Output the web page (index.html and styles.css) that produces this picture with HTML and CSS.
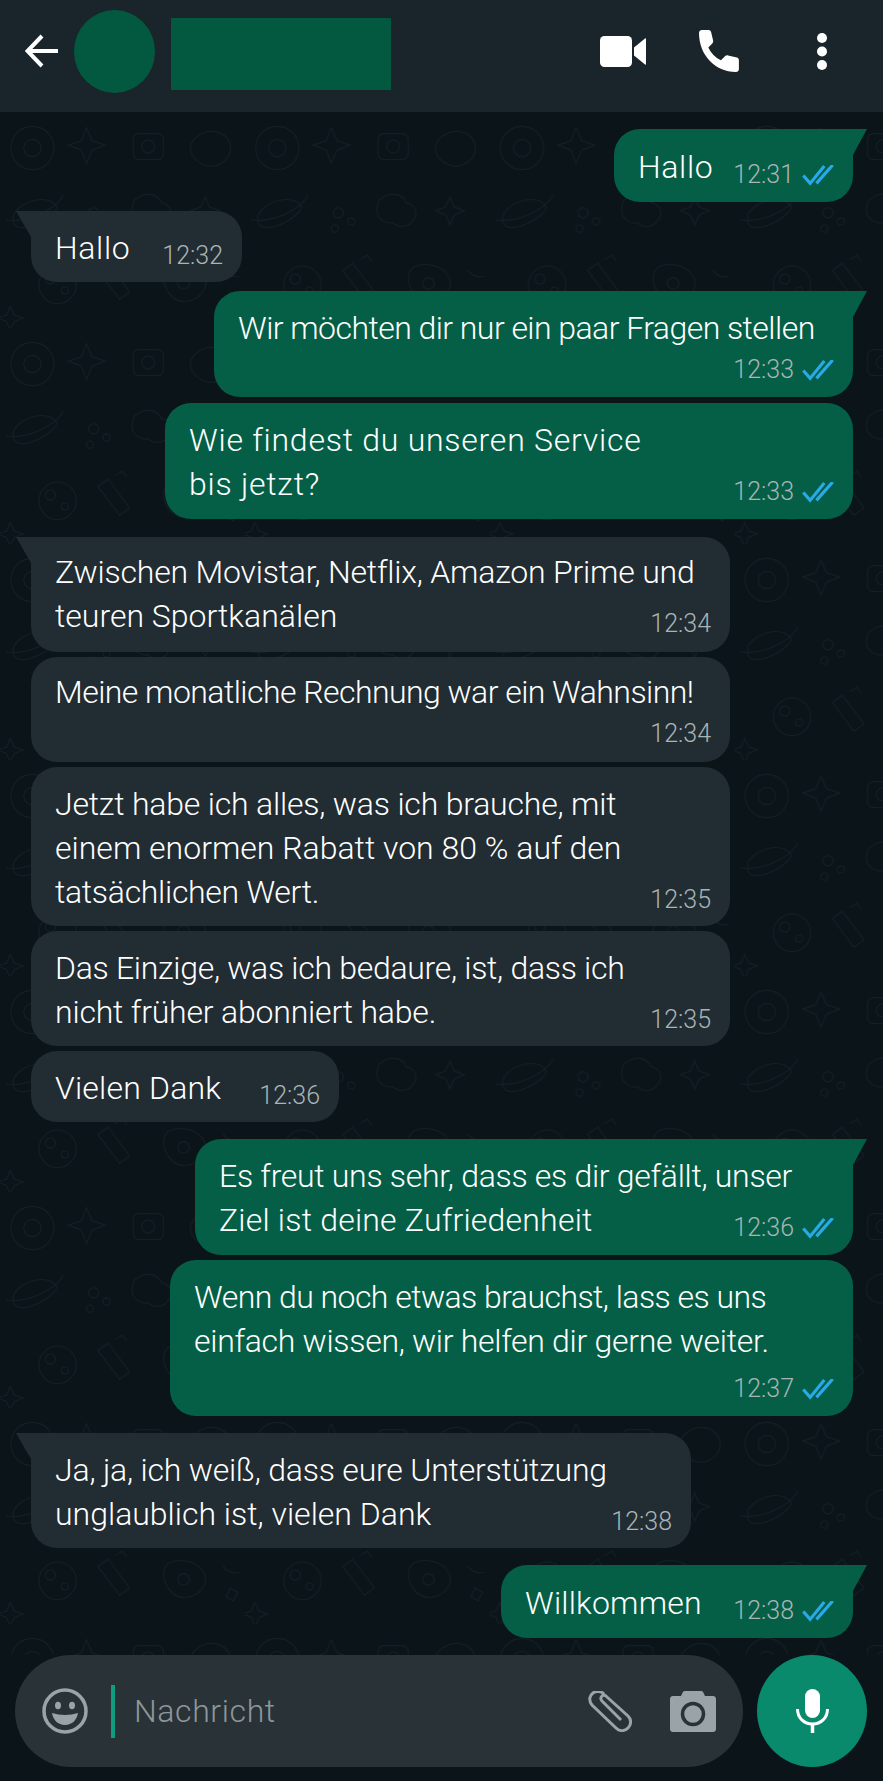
FILE: index.html
```html
<!DOCTYPE html>
<html lang="de">
<head>
    <meta charset="UTF-8">
    <meta name="viewport" content="width=device-width, initial-scale=1.0">
    <title>Chat</title>
    <link rel="stylesheet" href="styles.css">
</head>
<body>

    <!-- Top Bar -->
    <header class="topbar">
        <svg class="icon-back" viewBox="0 0 34 34"><path d="M33 17H3M17 2 2.500 17 17 32" fill="none" stroke="#fff" stroke-width="4"/></svg>
        <div class="avatar"></div>
        <div class="name-block"></div>
        <div class="topbar-actions">
            <svg class="icon-video" viewBox="0 0 46 31"><rect x="0" y="0" width="32" height="31" rx="4.500" fill="#fff"/><path d="M34 11.500 45 2.500c.5-.4 1-.1 1 .5v25c0 .6-.5.9-1 .5l-11-9z" fill="#fff"/></svg>
            <svg class="icon-phone" viewBox="0 0 43 42"><path d="M4 0h6.500c1.300 0 2.300.8 2.600 2l2 8.500c.3 1.100 0 2.100-.8 2.900l-4 4.100c2.700 5.800 6.900 10 12.600 12.700l4.100-4c.8-.8 1.900-1.100 3-.8l8.900 2.100c1.200.3 2 1.300 2 2.600V39c0 1.700-1.300 3-3 3C17.300 42 1 25.200 1 3c0-1.700 1.300-3 3-3z" fill="#fff"/></svg>
            <svg class="icon-dots" viewBox="0 0 12 37"><circle cx="6" cy="5" r="5" fill="#fff"/><circle cx="6" cy="18.500" r="5" fill="#fff"/><circle cx="6" cy="32" r="5" fill="#fff"/></svg>
        </div>
    </header>

    <!-- Chat Area -->
    <main class="chat">
        <svg class="doodles" width="883" height="1543">
            <defs>
                <pattern id="doodle" width="340" height="300" patternUnits="userSpaceOnUse" patternTransform="scale(.72)">
                    <g fill="none" stroke="#141f25" stroke-width="1.500">
                        <circle cx="45" cy="50" r="30"/>
                        <circle cx="45" cy="50" r="12"/>
                        <path d="M120 22l8 18 18 6-18 7-8 18-7-18-18-7 18-6z"/>
                        <rect x="185" y="30" width="42" height="36" rx="8"/>
                        <circle cx="206" cy="48" r="9"/>
                        <path d="M268 40c18-22 50-14 52 8 2 20-22 34-40 24-14-8-20-20-12-32z"/>
                        <path d="M20 140c16-20 46-24 58-10 6 10-34 34-52 30-8-2-10-12-6-20z"/>
                        <path d="M8 150c30 4 66-12 80-34"/>
                        <circle cx="130" cy="140" r="7"/><circle cx="148" cy="152" r="5"/><circle cx="125" cy="162" r="5"/>
                        <path d="M190 120c14-10 30-6 34 6 12 2 18 14 10 24-6 10-20 12-28 4-14 2-26-10-22-22 0-6 2-10 6-12z"/>
                        <path d="M285 118l6 14 14 5-14 6-6 14-6-14-14-6 14-5z"/>
                        <circle cx="80" cy="240" r="26"/>
                        <circle cx="70" cy="232" r="7"/><circle cx="90" cy="248" r="5"/>
                        <path d="M150 210l30 40-14 10-30-40zM160 205l10-6 6 8"/>
                        <path d="M235 215c20-8 44 0 50 18 4 16-14 32-32 30-20-2-36-34-18-48z"/>
                        <circle cx="255" cy="238" r="8"/>
                        <path d="M310 220c6 8 14 10 22 8M320 250l10 6-6 12-10-6z"/>
                        <path d="M14 270l6 12 12 4-12 5-6 12-5-12-12-5 12-4z"/>
                    </g>
                </pattern>
            </defs>
            <rect width="883" height="1543" fill="url(#doodle)"/>
        </svg>

        <div class="bubble out tail w-hallo-out first">
            <p class="text"><span class="line t-wide">Hallo</span></p>
            <span class="meta">12:31 <svg class="ticks" viewBox="0 0 30 20"><path d="M1 10l6.500 7.500L21 1M13.500 17.500 29 0" fill="none" stroke="#29a9e8" stroke-width="3"/></svg></span>
        </div>

        <div class="bubble in tail w-hallo-in near">
            <p class="text"><span class="line t-wide">Hallo</span></p>
            <span class="meta">12:32</span>
        </div>

        <div class="bubble out tail w-fragen near">
            <p class="text"><span class="line t-tight">Wir möchten dir nur ein paar Fragen stellen</span></p>
            <span class="meta">12:33 <svg class="ticks" viewBox="0 0 30 20"><path d="M1 10l6.500 7.500L21 1M13.500 17.500 29 0" fill="none" stroke="#29a9e8" stroke-width="3"/></svg></span>
        </div>

        <div class="bubble out w-service next">
            <p class="text"><span class="line t-widest">Wie findest du unseren Service</span><span class="line t-widest">bis jetzt?</span></p>
            <span class="meta">12:33 <svg class="ticks" viewBox="0 0 30 20"><path d="M1 10l6.500 7.500L21 1M13.500 17.500 29 0" fill="none" stroke="#29a9e8" stroke-width="3"/></svg></span>
        </div>

        <div class="bubble in tail w-full group lift">
            <p class="text"><span class="line t-snug">Zwischen Movistar, Netflix, Amazon Prime und</span><span class="line">teuren Sportkanälen</span></p>
            <span class="meta meta-up">12:34</span>
        </div>

        <div class="bubble in w-full lift">
            <p class="text"><span class="line t-tight">Meine monatliche Rechnung war ein Wahnsinn!</span></p>
            <span class="meta">12:34</span>
        </div>

        <div class="bubble in w-full">
            <p class="text"><span class="line t-snug">Jetzt habe ich alles, was ich brauche, mit</span><span class="line">einem enormen Rabatt von 80 % auf den</span><span class="line t-close">tatsächlichen Wert.</span></p>
            <span class="meta">12:35</span>
        </div>

        <div class="bubble in w-full">
            <p class="text"><span class="line t-close">Das Einzige, was ich bedaure, ist, dass ich</span><span class="line t-snug">nicht früher abonniert habe.</span></p>
            <span class="meta">12:35</span>
        </div>

        <div class="bubble in w-dank">
            <p class="text"><span class="line t-open">Vielen Dank</span></p>
            <span class="meta">12:36</span>
        </div>

        <div class="bubble out tail w-freut group-close">
            <p class="text"><span class="line t-close">Es freut uns sehr, dass es dir gefällt, unser</span><span class="line t-open">Ziel ist deine Zufriedenheit</span></p>
            <span class="meta meta-up">12:36 <svg class="ticks" viewBox="0 0 30 20"><path d="M1 10l6.500 7.500L21 1M13.500 17.500 29 0" fill="none" stroke="#29a9e8" stroke-width="3"/></svg></span>
        </div>

        <div class="bubble out w-wissen">
            <p class="text"><span class="line t-tight">Wenn du noch etwas brauchst, lass es uns</span><span class="line t-close">einfach wissen, wir helfen dir gerne weiter.</span></p>
            <span class="meta meta-row">12:37 <svg class="ticks" viewBox="0 0 30 20"><path d="M1 10l6.500 7.500L21 1M13.500 17.500 29 0" fill="none" stroke="#29a9e8" stroke-width="3"/></svg></span>
        </div>

        <div class="bubble in tail w-ja group-close">
            <p class="text"><span class="line t-snug">Ja, ja, ich weiß, dass eure Unterstützung</span><span class="line">unglaublich ist, vielen Dank</span></p>
            <span class="meta meta-up">12:38</span>
        </div>

        <div class="bubble out tail w-willkommen group-close">
            <p class="text"><span class="line t-open">Willkommen</span></p>
            <span class="meta">12:38 <svg class="ticks" viewBox="0 0 30 20"><path d="M1 10l6.500 7.500L21 1M13.500 17.500 29 0" fill="none" stroke="#29a9e8" stroke-width="3"/></svg></span>
        </div>
    </main>

    <!-- Message Input -->
    <footer class="composer">
        <div class="input-box">
            <svg class="icon-smiley" viewBox="0 0 46 46">
                <circle cx="23" cy="23" r="21" fill="none" stroke="#9aa3a8" stroke-width="3.500"/>
                <ellipse cx="16" cy="17.500" rx="3" ry="3.800" fill="#9aa3a8"/>
                <ellipse cx="30" cy="17.500" rx="3" ry="3.800" fill="#9aa3a8"/>
                <path d="M10 25c8 2.500 18 2.500 26 0-1 7-6 12-13 12s-12-5-13-12z" fill="#9aa3a8"/>
            </svg>
            <span class="cursor"></span>
            <span class="placeholder">Nachricht</span>
            <svg class="icon-clip" viewBox="0 0 44 41"><path d="M33 29 14 10c-2-2-1-4 0-5s3-1 5 1l21 19c4 4 3 9 0 12s-8 4-12 0L4 14C0 9 2 4 5 2s8-2 11 1" fill="none" stroke="#9aa3a8" stroke-width="3"/></svg>
            <svg class="icon-camera" viewBox="0 0 46 41"><path d="M15 0h16c1 0 1.700.4 2.200 1.200L35 5h8c1.700 0 3 1.300 3 3v30c0 1.700-1.300 3-3 3H3c-1.700 0-3-1.300-3-3V8c0-1.700 1.300-3 3-3h8l1.800-3.800C13.300.4 14 0 15 0z" fill="#9aa3a8"/><circle cx="23" cy="23" r="10.500" fill="none" stroke="#283237" stroke-width="3.500"/></svg>
        </div>
        <button class="mic-btn">
            <svg class="icon-mic" viewBox="0 0 33 44"><rect x="9" y="0" width="15" height="29" rx="7.500" fill="#fff"/><path d="M1.500 20c0 9 6.500 15 15 15s15-6 15-15" fill="none" stroke="#fff" stroke-width="3"/><path d="M16.500 34v10" stroke="#fff" stroke-width="3.500"/></svg>
        </button>
    </footer>

</body>
</html>
```

FILE: styles.css
```css
/* General Styles */
* {
    box-sizing: border-box;
}

body {
    margin: 0;
    width: 883px;
    height: 1781px;
    overflow: hidden;
    font-family: 'Roboto', sans-serif;
    background-color: #0a1419;
    color: #fff;
    position: relative;
}

/* Top Bar */
.topbar {
    height: 112px;
    background-color: #1a242b;
    display: flex;
    align-items: center;
    padding-left: 25px;
}

.icon-back {
    width: 34px;
    height: 34px;
    margin-top: -10px;
}

.avatar {
    width: 81px;
    height: 83px;
    margin: -9px 0 0 15px;
    border-radius: 50%;
    background-color: #03593f;
}

.name-block {
    width: 220px;
    height: 72px;
    margin: -4px 0 0 16px;
    background-color: #03593f;
}

.topbar-actions {
    margin-left: auto;
    margin-right: 55px;
    display: flex;
    align-items: center;
    margin-top: -10px;
}

.icon-video {
    width: 46px;
    height: 31px;
}

.icon-phone {
    width: 43px;
    height: 42px;
    margin-left: 52px;
}

.icon-dots {
    width: 12px;
    height: 37px;
    margin-left: 75px;
}

/* Chat Area */
.chat {
    position: relative;
    height: 1543px;
    display: flex;
    flex-direction: column;
    padding: 0 30px 0 31px;
    overflow: hidden;
}

.doodles {
    position: absolute;
    top: 0;
    left: 0;
}

/* Bubbles */
.bubble {
    position: relative;
    display: flex;
    flex-wrap: wrap;
    justify-content: space-between;
    align-items: flex-end;
    padding: 15px 19px 13px 24px;
    border-radius: 26px;
    margin-top: 5px;
}

.bubble.in {
    align-self: flex-start;
    background-color: #212c33;
    padding-bottom: 12px;
    min-height: 71px;
}

.bubble.out {
    align-self: flex-end;
    background-color: #045f46;
    min-height: 73px;
}

.bubble.first {
    margin-top: 17px;
}

.bubble.near {
    margin-top: 9px;
}

.bubble.next {
    margin-top: 6px;
}

.bubble.group {
    margin-top: 18px;
}

.bubble.group-close {
    margin-top: 17px;
}

.bubble.in.lift {
    padding-top: 13px;
    padding-bottom: 14px;
}

.bubble.in.tail {
    border-top-left-radius: 0;
}

.bubble.out.tail {
    border-top-right-radius: 0;
}

.bubble.tail::before {
    content: "";
    position: absolute;
    top: 0;
    width: 15px;
    height: 26px;
    background-color: inherit;
}

.bubble.in.tail::before {
    left: -15px;
    clip-path: polygon(0 0, 100% 0, 100% 100%);
}

.bubble.out.tail::before {
    right: -14px;
    width: 14px;
    clip-path: polygon(0 0, 100% 0, 0 100%);
}

.text {
    margin: 0;
    font-size: 32px;
    font-weight: 300;
    line-height: 44px;
    white-space: nowrap;
}

.line {
    display: block;
}

/* Tracking of the message lines */
.t-tight { letter-spacing: -0.55px; }
.t-close { letter-spacing: -0.3px; }
.t-snug { letter-spacing: -0.2px; }
.t-open { letter-spacing: 0.2px; }
.t-wide { letter-spacing: 0.65px; }
.t-widest { letter-spacing: 0.75px; }

.meta {
    margin: 3px 0 -3px auto;
    display: flex;
    align-items: center;
    gap: 8px;
    font-size: 25px;
    font-weight: 300;
    line-height: 34px;
    color: #a9b5b5;
    white-space: nowrap;
}

.meta-up {
    margin-top: -31px;
}

.meta-row {
    margin-top: 9px;
}

.ticks {
    width: 32px;
    height: 21px;
}

/* Bubble Widths */
.w-hallo-out { width: 239px; }
.w-hallo-in { width: 211px; }
.w-fragen { width: 639px; }
.w-service { width: 688px; }
.w-full { width: 699px; }
.w-dank { width: 308px; }
.w-freut { width: 658px; }
.w-wissen { width: 683px; }
.w-ja { width: 660px; }
.w-willkommen { width: 352px; }

/* Message Input */
.composer {
    display: flex;
    align-items: flex-start;
    padding: 0 16px 0 15px;
    gap: 14px;
}

.input-box {
    width: 728px;
    height: 112px;
    border-radius: 56px;
    background-color: #283237;
    display: flex;
    align-items: center;
    padding-left: 27px;
}

.icon-smiley {
    width: 46px;
    height: 46px;
}

.cursor {
    width: 4px;
    height: 53px;
    margin-left: 23px;
    background-color: #0f9d80;
}

.placeholder {
    margin-left: 19px;
    font-size: 32px;
    font-weight: 300;
    letter-spacing: 0.6px;
    color: #8d969b;
}

.icon-clip {
    width: 44px;
    height: 41px;
    margin-left: auto;
}

.icon-camera {
    width: 46px;
    height: 41px;
    margin: 0 27px 0 38px;
}

.mic-btn {
    width: 110px;
    height: 112px;
    border: none;
    border-radius: 50%;
    background-color: #0a8a6c;
    display: flex;
    align-items: center;
    justify-content: center;
    padding: 0;
}

.icon-mic {
    width: 33px;
    height: 44px;
}
```
